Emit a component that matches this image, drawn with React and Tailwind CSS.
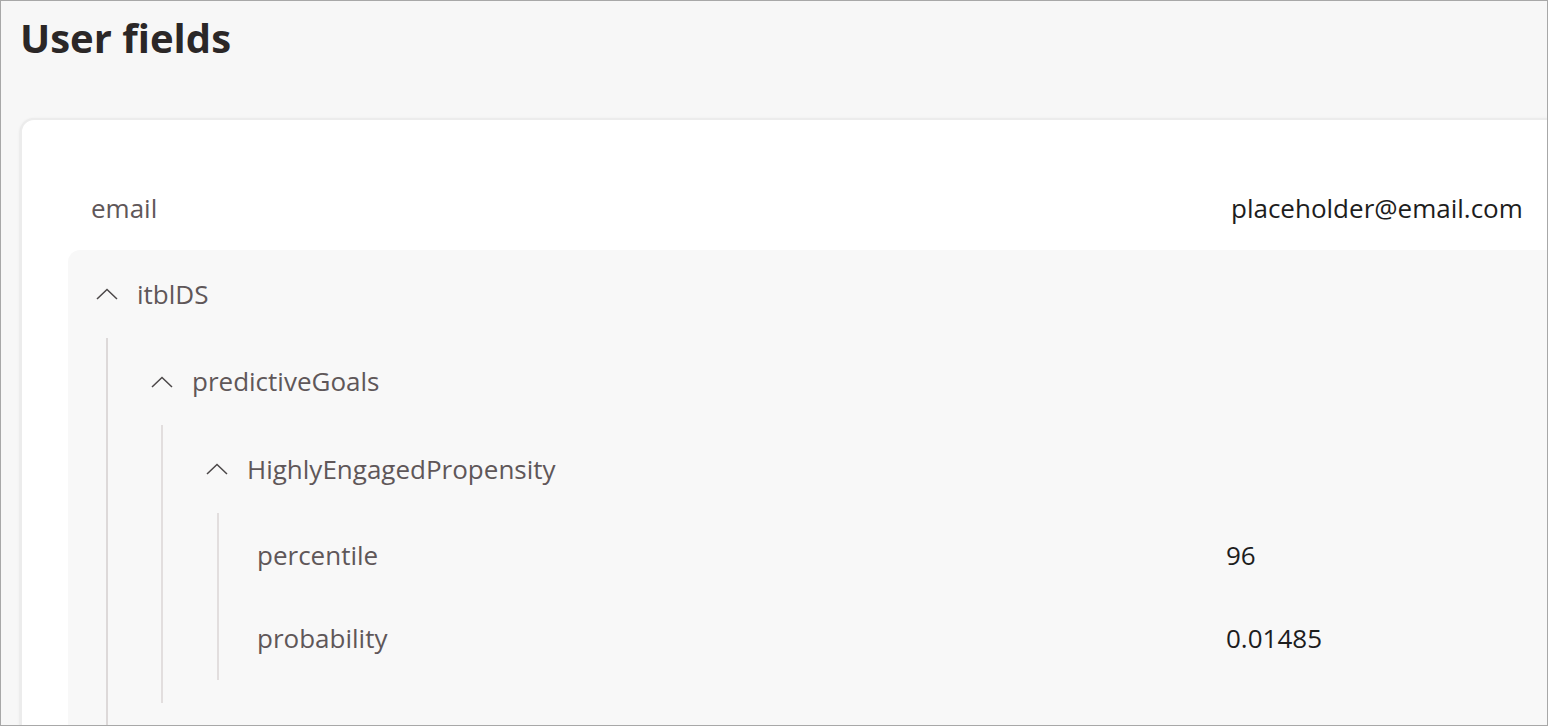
import React from 'react';

const font = { fontFamily: '"Open Sans", "Liberation Sans", sans-serif' };

const Chevron = () => (
  <svg width="22" height="12" viewBox="0 0 22 12" className="shrink-0">
    <polyline points="1,11 11,1.5 21,11" fill="none" stroke="#4b4748" strokeWidth="1.5" />
  </svg>
);

const GroupHeader = ({ label, h }) => (
  <div className={`flex items-center gap-[19px] ${h}`}>
    <Chevron />
    <span className="text-[26px] text-[#5f5759]">{label}</span>
  </div>
);

const Leaf = ({ label, value, labelW, h }) => (
  <div className={`flex items-center ${h}`}>
    <span className={`${labelW} shrink-0 text-[26px] text-[#5f5759]`}>{label}</span>
    <span className="text-[26px] text-[#1d1d1d]">{value}</span>
  </div>
);

export default function App() {
  return (
    <div
      className="h-[726px] w-full overflow-hidden border border-[#a8a8a8] bg-[#f7f7f7]"
      style={font}
    >
      {/* Title */}
      <h1 className="pl-[19px] pt-[17px] text-[40px] font-bold leading-[40px] text-[#2b2727]">
        User fields
      </h1>

      {/* Card */}
      <div className="ml-[19px] mt-[60px] w-[1560px] rounded-tl-[14px] border-2 border-[#ececec] bg-white pl-[46px] pt-[46px] shadow-sm">
        <div className="pl-[23px]">
          <Leaf label="email" value="placeholder@email.com" labelW="w-[1140px]" h="h-[84px]" />
        </div>

        {/* itblDS */}
        <div className="rounded-tl-[12px] bg-[#f8f8f8] pl-[28px]">
          <GroupHeader label="itblDS" h="h-[88px]" />
          <div className="ml-[10px] h-[400px] border-l-2 border-[#ddd9d9] pl-[43px]">
            {/* predictiveGoals */}
            <GroupHeader label="predictiveGoals" h="h-[87px]" />
            <div className="ml-[10px] border-l-2 border-[#e2dede] pb-[23px] pl-[43px]">
              {/* HighlyEngagedPropensity */}
              <GroupHeader label="HighlyEngagedPropensity" h="h-[88px]" />
              <div className="ml-[11px] border-l-2 border-[#e2dede] pl-[38px]">
                <Leaf label="percentile" value="96" labelW="w-[969px]" h="h-[84px]" />
                <Leaf label="probability" value="0.01485" labelW="w-[969px]" h="h-[83px]" />
              </div>
            </div>
          </div>
        </div>
      </div>
    </div>
  );
}
